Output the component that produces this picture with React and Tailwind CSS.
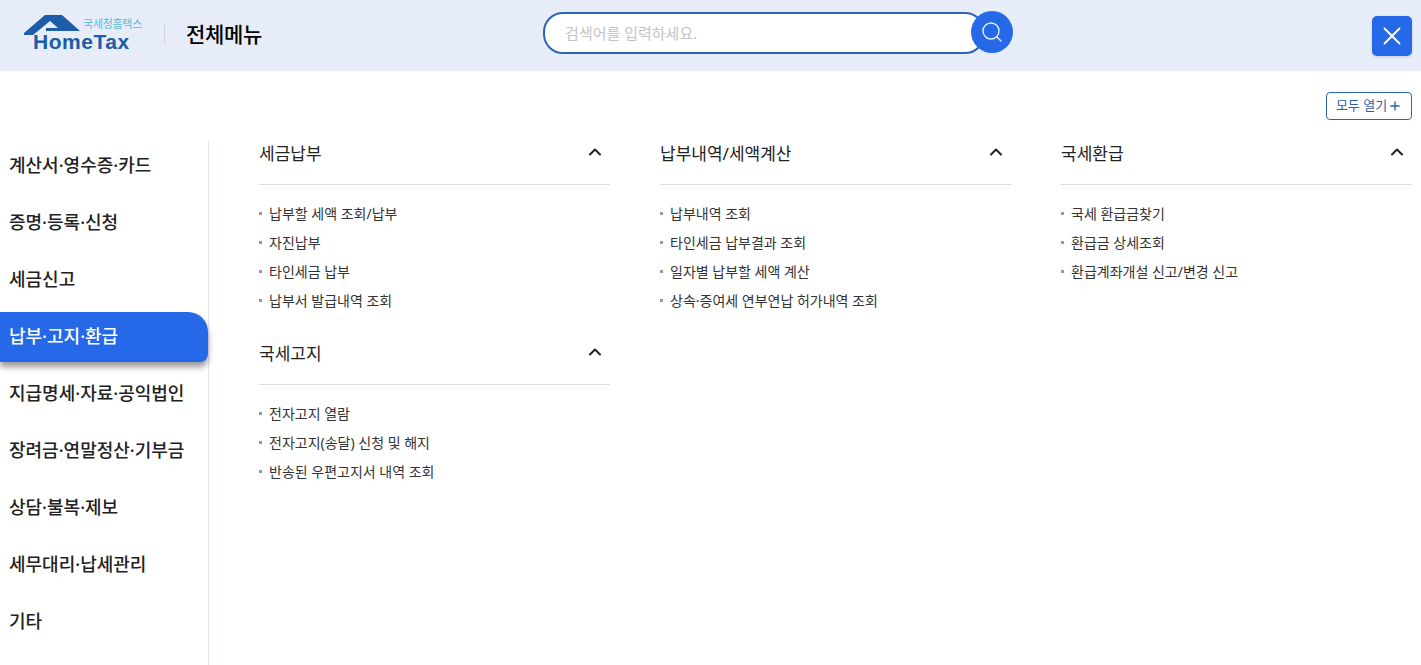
import { ChevronUp, Plus, Search, X } from 'lucide-react';

const sideMenu = [
  '계산서·영수증·카드',
  '증명·등록·신청',
  '세금신고',
  '납부·고지·환급',
  '지급명세·자료·공익법인',
  '장려금·연말정산·기부금',
  '상담·불복·제보',
  '세무대리·납세관리',
  '기타',
];

const columns = [
  [
    { title: '세금납부', items: ['납부할 세액 조회/납부', '자진납부', '타인세금 납부', '납부서 발급내역 조회'] },
    { title: '국세고지', items: ['전자고지 열람', '전자고지(송달) 신청 및 해지', '반송된 우편고지서 내역 조회'] },
  ],
  [
    { title: '납부내역/세액계산', items: ['납부내역 조회', '타인세금 납부결과 조회', '일자별 납부할 세액 계산', '상속·증여세 연부연납 허가내역 조회'] },
  ],
  [
    { title: '국세환급', items: ['국세 환급금찾기', '환급금 상세조회', '환급계좌개설 신고/변경 신고'] },
  ],
];

const Logo = () => (
  <div className="relative mt-[15px] h-[38px] w-[118px] shrink-0">
    <svg className="absolute left-0 top-0" width="80" height="24" viewBox="0 0 80 24">
      <path d="M0 18 L21 0 L38 0 L56 16 L22 16 L22 13 L34 13 L26 6 L9 20 L0 20 Z" fill="#1d5ca6" />
    </svg>
    <span className="absolute right-0 top-[2px] text-[11px] leading-[14px] tracking-[-0.3px] text-[#5db8d6]">국세청홈택스</span>
    <span className="absolute left-[9px] top-[15px] font-['Liberation_Sans',sans-serif] text-[21px] font-bold leading-[24px] tracking-[0.55px] text-[#1d5ca6]">HomeTax</span>
  </div>
);

const Section = ({ title, items }) => (
  <section className="mb-[26px]">
    <div className="flex h-11 items-start justify-between border-b border-[#dddddd]">
      <h3 className="text-[17px] leading-[26px] font-normal text-[#222222]">{title}</h3>
      <ChevronUp size={20} strokeWidth={2.4} className="mr-[5px] mt-[1px] text-[#222222]" />
    </div>
    <ul className="mt-[14px]">
      {items.map((item) => (
        <li key={item} className="flex h-[29px] items-center text-[14px] text-[#333333]">
          <span className="mr-[7px] h-[3px] w-[3px] bg-[#999999]" />
          {item}
        </li>
      ))}
    </ul>
  </section>
);

const App = () => {
  return (
    <div className="h-[665px] overflow-hidden bg-white font-['Noto_Sans','Noto_Sans_CJK_KR',sans-serif]">
      <header className="flex h-[71px] items-start bg-[#e6edf8] pl-6 pr-[9px]">
        <Logo />
        <div className="ml-[22px] mt-6 h-5 w-px bg-[#cfd3da]" />
        <h1 className="ml-[21px] mt-[19px] text-[21px] leading-[30px] font-medium tracking-[-0.3px] text-black">전체메뉴</h1>
        <div className="ml-[281px] mt-[11px] flex items-start">
          <div className="mt-px flex h-[42px] w-[442px] items-center rounded-[20px] border-2 border-[#2b63b9] bg-white pl-5 text-[15px] text-[#c4c4c4]">
            검색어를 입력하세요.
          </div>
          <button className="-ml-[14px] grid h-[42px] w-[42px] place-items-center rounded-full bg-[#2568e8] text-[#e6edf8]">
            <Search size={24} strokeWidth={1.4} />
          </button>
        </div>
        <button className="ml-auto mt-4 grid h-10 w-10 place-items-center rounded-[5px] bg-[#2568e8] text-white shadow-sm">
          <X size={30} strokeWidth={1.5} />
        </button>
      </header>

      <div className="flex h-[70px] items-start justify-end pr-[9px] pt-[21px]">
        <button className="flex h-[28px] w-[86px] items-center justify-center rounded-[4px] border border-[#2b63b9] text-[13px] text-[#2b5fa8]">
          모두 열기
          <Plus size={14} strokeWidth={2.4} className="ml-[1px]" />
        </button>
      </div>

      <div className="flex">
        <nav className="flex h-[524px] w-[209px] shrink-0 flex-col gap-[7px] border-r border-[#e2e6f0]">
          {sideMenu.map((label, i) => (
            <div
              key={label}
              className={
                i === 3
                  ? 'flex h-[50px] shrink-0 items-center rounded-tr-[20px] rounded-br-[8px] bg-[#2568e8] pb-[2px] pl-[9px] text-[18px] font-medium text-white shadow-[0_5px_6px_rgba(0,0,0,0.4)]'
                  : 'flex h-[50px] shrink-0 items-center pb-[2px] pl-[9px] text-[18px] font-medium text-[#222222]'
              }
            >
              {label}
            </div>
          ))}
        </nav>
        <div className="ml-[50px] grid w-[1153px] grid-cols-3 gap-x-[50px]">
          {columns.map((sections) => (
            <div key={sections[0].title}>
              {sections.map((s) => (
                <Section key={s.title} title={s.title} items={s.items} />
              ))}
            </div>
          ))}
        </div>
      </div>
    </div>
  );
};

export default App;
